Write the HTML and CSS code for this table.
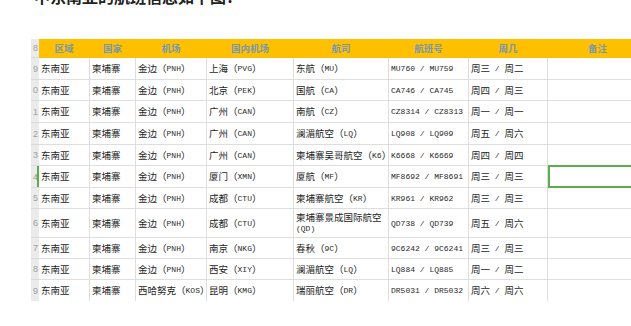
FILE: index.html
```html
<!DOCTYPE html>
<html lang="zh">
<head>
<meta charset="utf-8">
<title>航班信息</title>
<link rel="stylesheet" href="styles.css">
</head>
<body>
<p class="intro">中东南亚的航班信息如下图：</p>
<div class="sheet">
  <div class="row head">
    <div class="rn"><span>18</span></div>
    <div class="c">区域</div><div class="c">国家</div><div class="c">机场</div><div class="c">国内机场</div><div class="c">航司</div><div class="c">航班号</div><div class="c">周几</div><div class="c">备注</div>
  </div>
  <div class="row h22">
    <div class="rn"><span>19</span></div>
    <div class="c">东南亚</div><div class="c">柬埔寨</div><div class="c">金边<span class="p">（</span><span class="en">PNH</span><span class="p">）</span></div><div class="c">上海<span class="p">（</span><span class="en">PVG</span><span class="p">）</span></div><div class="c">东航<span class="p">（</span><span class="en">MU</span><span class="p">）</span></div><div class="c en">MU760 / MU759</div><div class="c">周三<span class="en"> / </span>周二</div><div class="c"></div>
  </div>
  <div class="row h21">
    <div class="rn"><span>20</span></div>
    <div class="c">东南亚</div><div class="c">柬埔寨</div><div class="c">金边<span class="p">（</span><span class="en">PNH</span><span class="p">）</span></div><div class="c">北京<span class="p">（</span><span class="en">PEK</span><span class="p">）</span></div><div class="c">国航<span class="p">（</span><span class="en">CA</span><span class="p">）</span></div><div class="c en">CA746 / CA745</div><div class="c">周四<span class="en"> / </span>周三</div><div class="c"></div>
  </div>
  <div class="row h22">
    <div class="rn"><span>21</span></div>
    <div class="c">东南亚</div><div class="c">柬埔寨</div><div class="c">金边<span class="p">（</span><span class="en">PNH</span><span class="p">）</span></div><div class="c">广州<span class="p">（</span><span class="en">CAN</span><span class="p">）</span></div><div class="c">南航<span class="p">（</span><span class="en">CZ</span><span class="p">）</span></div><div class="c en">CZ8314 / CZ8313</div><div class="c">周一<span class="en"> / </span>周一</div><div class="c"></div>
  </div>
  <div class="row h22">
    <div class="rn"><span>22</span></div>
    <div class="c">东南亚</div><div class="c">柬埔寨</div><div class="c">金边<span class="p">（</span><span class="en">PNH</span><span class="p">）</span></div><div class="c">广州<span class="p">（</span><span class="en">CAN</span><span class="p">）</span></div><div class="c">澜湄航空<span class="p">（</span><span class="en">LQ</span><span class="p">）</span></div><div class="c en">LQ908 / LQ909</div><div class="c">周五<span class="en"> / </span>周六</div><div class="c"></div>
  </div>
  <div class="row h21">
    <div class="rn"><span>23</span></div>
    <div class="c">东南亚</div><div class="c">柬埔寨</div><div class="c">金边<span class="p">（</span><span class="en">PNH</span><span class="p">）</span></div><div class="c">广州<span class="p">（</span><span class="en">CAN</span><span class="p">）</span></div><div class="c">柬埔寨吴哥航空<span class="p">（</span><span class="en">K6</span><span class="p">）</span></div><div class="c en">K6668 / K6669</div><div class="c">周四<span class="en"> / </span>周四</div><div class="c"></div>
  </div>
  <div class="row h22">
    <div class="rn sel"><span>24</span></div>
    <div class="c">东南亚</div><div class="c">柬埔寨</div><div class="c">金边<span class="p">（</span><span class="en">PNH</span><span class="p">）</span></div><div class="c">厦门<span class="p">（</span><span class="en">XMN</span><span class="p">）</span></div><div class="c">厦航<span class="p">（</span><span class="en">MF</span><span class="p">）</span></div><div class="c en">MF8692 / MF8691</div><div class="c">周三<span class="en"> / </span>周三</div><div class="c active"></div>
  </div>
  <div class="row h21">
    <div class="rn"><span>25</span></div>
    <div class="c">东南亚</div><div class="c">柬埔寨</div><div class="c">金边<span class="p">（</span><span class="en">PNH</span><span class="p">）</span></div><div class="c">成都<span class="p">（</span><span class="en">CTU</span><span class="p">）</span></div><div class="c">柬埔寨航空<span class="p">（</span><span class="en">KR</span><span class="p">）</span></div><div class="c en">KR961 / KR962</div><div class="c">周三<span class="en"> / </span>周三</div><div class="c"></div>
  </div>
  <div class="row h29">
    <div class="rn"><span>26</span></div>
    <div class="c">东南亚</div><div class="c">柬埔寨</div><div class="c">金边<span class="p">（</span><span class="en">PNH</span><span class="p">）</span></div><div class="c">成都<span class="p">（</span><span class="en">CTU</span><span class="p">）</span></div><div class="c wrap">柬埔寨景成国际航空<br><span class="en">(QD)</span></div><div class="c en">QD738 / QD739</div><div class="c">周五<span class="en"> / </span>周六</div><div class="c"></div>
  </div>
  <div class="row h21">
    <div class="rn"><span>27</span></div>
    <div class="c">东南亚</div><div class="c">柬埔寨</div><div class="c">金边<span class="p">（</span><span class="en">PNH</span><span class="p">）</span></div><div class="c">南京<span class="p">（</span><span class="en">NKG</span><span class="p">）</span></div><div class="c">春秋<span class="p">（</span><span class="en">9C</span><span class="p">）</span></div><div class="c en">9C6242 / 9C6241</div><div class="c">周三<span class="en"> / </span>周三</div><div class="c"></div>
  </div>
  <div class="row h21">
    <div class="rn"><span>28</span></div>
    <div class="c">东南亚</div><div class="c">柬埔寨</div><div class="c">金边<span class="p">（</span><span class="en">PNH</span><span class="p">）</span></div><div class="c">西安<span class="p">（</span><span class="en">XIY</span><span class="p">）</span></div><div class="c">澜湄航空<span class="p">（</span><span class="en">LQ</span><span class="p">）</span></div><div class="c en">LQ884 / LQ885</div><div class="c">周一<span class="en"> / </span>周二</div><div class="c"></div>
  </div>
  <div class="row h21 last">
    <div class="rn"><span>29</span></div>
    <div class="c">东南亚</div><div class="c">柬埔寨</div><div class="c">西哈努克<span class="p">（</span><span class="en">KOS</span><span class="p">）</span></div><div class="c">昆明<span class="p">（</span><span class="en">KMG</span><span class="p">）</span></div><div class="c">瑞丽航空<span class="p">（</span><span class="en">DR</span><span class="p">）</span></div><div class="c en">DR5031 / DR5032</div><div class="c">周六<span class="en"> / </span>周六</div><div class="c"></div>
  </div>
</div>
</body>
</html>
```

FILE: styles.css
```css
html, body {
  margin: 0;
  padding: 0;
  background: #ffffff;
  overflow: hidden;
}

body {
  width: 631px;
  height: 326px;
  font-family: "Noto Sans CJK SC", "Noto Sans", sans-serif;
  color: #222222;
}

.intro {
  margin: -13px 0 0 34px;
  font-size: 16px;
  line-height: 18px;
  font-weight: bold;
  color: #222222;
  white-space: nowrap;
}

.sheet {
  margin: 34px 0 0 31px;
  width: 617px;
}

.row {
  display: grid;
  grid-template-columns: 8px 51px 46px 71px 87px 95px 80px 79px 100px;
  height: 22px;
}

.row.head { height: 19px; }
.row.h22 { height: 22px; }
.row.h21 { height: 21px; }
.row.h29 { height: 29px; }

.rn {
  display: flex;
  justify-content: flex-end;
  align-items: center;
  overflow: hidden;
  background: #ebebeb;
  border-bottom: 1px solid #dadada;
  box-sizing: border-box;
  font-family: "Liberation Sans", sans-serif;
  font-size: 9px;
  color: #a0a0a0;
  padding-right: 1px;
}

.rn span {
  flex: none;
  letter-spacing: 3px;
  margin-right: -3px;
}

.rn.sel {
  box-shadow: inset -2px 0 0 #5aae4f;
  color: #78a86e;
}

.c {
  box-sizing: border-box;
  border-right: 1px solid #dedede;
  border-bottom: 1px solid #dedede;
  padding: 0 0 0 2px;
  display: flex;
  align-items: center;
  font-size: 9.5px;
  line-height: 11px;
  white-space: pre;
  overflow: visible;
  color: #1e1e1e;
}

.head .c {
  background: #ffc000;
  border-right: 1px solid #ffc000;
  border-bottom: 1px solid #f5bd10;
  justify-content: center;
  padding: 0;
  font-weight: bold;
  color: #7897b0;
  font-size: 9.5px;
}

.c .p {
  font-size: 9.5px;
}

.en {
  font-family: "Liberation Mono", monospace;
  font-size: 8px;
  color: #2a2a2a;
}

.c.en {
  font-size: 8px;
}

.c.wrap {
  white-space: normal;
  flex-direction: column;
  align-items: flex-start;
  justify-content: center;
  line-height: 11px;
}

.c.active {
  border: 2px solid #5aae4f;
  margin-top: -1px;
  height: calc(100% + 1px);
}

.row.last .c,
.row.last .rn {
  border-bottom: none;
}
```
